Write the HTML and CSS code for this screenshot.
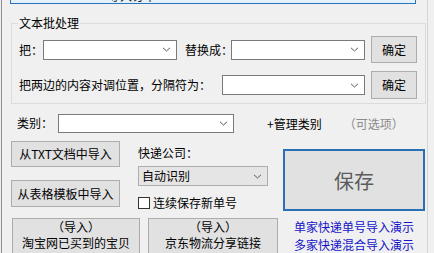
FILE: index.html
```html
<!DOCTYPE html>
<html lang="zh">
<head>
<meta charset="utf-8">
<link rel="stylesheet" href="styles.css">
</head>
<body>
<div class="win">
  <div class="topbtn"><span class="toptext">导入订单</span></div>
  <fieldset class="group">
    <legend>文本批处理</legend>
    <div class="row r1">
      <span class="lbl l-ba">把：</span>
      <div class="combo w134"><svg class="chev" width="9" height="5" viewBox="0 0 9 5"><path d="M1 0.8 L4.5 4 L8 0.8"/></svg></div>
      <span class="lbl l-th">替换成：</span>
      <div class="combo w134"><svg class="chev" width="9" height="5" viewBox="0 0 9 5"><path d="M1 0.8 L4.5 4 L8 0.8"/></svg></div>
      <button class="btn ok">确定</button>
    </div>
    <div class="row r2">
      <span class="lbl l-swap">把两边的内容对调位置，分隔符为：</span>
      <div class="combo w143"><svg class="chev" width="9" height="5" viewBox="0 0 9 5"><path d="M1 0.8 L4.5 4 L8 0.8"/></svg></div>
      <button class="btn ok">确定</button>
    </div>
  </fieldset>
  <div class="catrow">
    <span class="lbl l-cat">类别：</span>
    <div class="combo w176"><svg class="chev" width="9" height="5" viewBox="0 0 9 5"><path d="M1 0.8 L4.5 4 L8 0.8"/></svg></div>
    <span class="manage">+管理类别</span>
    <span class="opt">（可选项）</span>
  </div>
  <div class="lower">
    <div class="lowleft">
      <div class="la">
        <div class="col1">
          <button class="btn imp1">从TXT文档中导入</button>
          <button class="btn imp2">从表格模板中导入</button>
        </div>
        <div class="col2">
          <div class="kd">快递公司：</div>
          <div class="sel"><span>自动识别</span><svg class="chev" width="9" height="5" viewBox="0 0 9 5"><path d="M1 0.8 L4.5 4 L8 0.8"/></svg></div>
          <label class="chk"><span class="box"></span><span>连续保存新单号</span></label>
        </div>
      </div>
      <div class="lb">
        <button class="btn big b1"><span class="bl">（导入）</span><span class="bl">淘宝网已买到的宝贝</span></button>
        <button class="btn big b2"><span class="bl">（导入）</span><span class="bl">京东物流分享链接</span></button>
      </div>
    </div>
    <div class="lowright">
      <button class="save">保存</button>
      <a class="link l1">单家快递单号导入演示</a>
      <a class="link">多家快递混合导入演示</a>
    </div>
  </div>
</div>
</body>
</html>
```
FILE: styles.css
```css
* { box-sizing: border-box; }
html, body {
  margin: 0;
  padding: 0;
  background: #f0f0f0;
  width: 434px;
  height: 253px;
  overflow: hidden;
}
body {
  font-family: "Noto Sans CJK SC", "Microsoft YaHei", sans-serif;
  font-size: 12px;
  color: #000;
}
.win {
  margin-left: 1px;
  width: 427px;
  height: 253px;
  border-left: 1px solid #8e8e8e;
  border-right: 1px solid #d4d4d4;
  overflow: hidden;
}
.topbtn {
  margin: -20px 0 0 8px;
  width: 406px;
  height: 24px;
  border: 1px solid #2a74bd;
  background: #e5f1fb;
  padding: 7px 0 0 97px;
  line-height: 16px;
  overflow: hidden;
}
.toptext { color: #111; }

.group {
  margin: 10px 0 0 9px;
  width: 415px;
  padding: 0 6px 4px 6px;
  border: 1px solid #dcdcdc;
  min-width: 0;
}
.group legend {
  padding: 0 1px;
  line-height: 18px;
  font-size: 12px;
}
.row {
  display: flex;
  align-items: center;
}
.r1 { margin-top: 4px; height: 27px; }
.r2 { margin-top: 8px; height: 28px; }
.lbl { white-space: nowrap; line-height: 16px; }
.l-ba { margin-left: 1px; width: 24px; }
.l-th { margin-left: 8px; width: 46px; }
.l-swap { margin-left: 1px; width: 203px; }
.l-cat { margin-left: 15px; width: 41px; }

.combo {
  height: 20px;
  background: #fff;
  border: 1px solid #7a7a7a;
  display: flex;
  align-items: center;
  justify-content: flex-end;
  padding-right: 5px;
}
.w134 { width: 134px; }
.w143 { width: 143px; }
.w176 { width: 176px; }
.chev path { fill: none; stroke: #5a5a5a; stroke-width: 1; }

.btn {
  font-family: inherit;
  font-size: 12px;
  color: #000;
  background: #e1e1e1;
  border: 1px solid #adadad;
  padding: 0;
  margin: 0;
  line-height: 16px;
}
.ok { margin-left: 6px; width: 46px; }
.r1 .ok { height: 27px; }
.r2 .ok { height: 28px; }

.catrow {
  margin-top: 9px;
  height: 20px;
  display: flex;
  align-items: center;
}
.catrow .combo { height: 19px; }
.manage { margin-left: 33px; white-space: nowrap; }
.opt { margin-left: 22px; color: #8a8a8a; white-space: nowrap; }

.lower {
  margin-top: 8px;
  display: flex;
}
.lowleft { width: 281px; }
.la { display: flex; height: 67px; }
.col1 {
  margin-left: 9px;
  width: 109px;
  display: flex;
  flex-direction: column;
}
.imp1 { height: 26px; }
.imp2 { height: 27px; margin-top: 13px; }
.col2 { margin-left: 18px; width: 130px; }
.kd { margin-top: 3px; line-height: 18px; }
.sel {
  margin-top: 4px;
  height: 20px;
  background: #e5e5e5;
  border: 1px solid #adadad;
  display: flex;
  align-items: center;
  justify-content: space-between;
  padding: 0 5px 0 3px;
  line-height: 16px;
}
.chk {
  margin-top: 10px;
  display: flex;
  align-items: center;
  height: 13px;
  white-space: nowrap;
}
.box {
  width: 12px;
  height: 12px;
  border: 1px solid #333;
  background: #fff;
  margin-right: 3px;
  flex: none;
}
.lb {
  margin-top: 10px;
  margin-left: 10px;
  display: flex;
  gap: 8px;
}
.big {
  height: 40px;
  padding-top: 0;
  display: flex;
  flex-direction: column;
  align-items: center;
  justify-content: flex-start;
}
.bl {
  display: block;
  height: 16px;
  line-height: 16px;
  white-space: nowrap;
}
.b1 { width: 128px; }
.b2 { width: 130px; }

.lowright {
  width: 142px;
  display: flex;
  flex-direction: column;
  align-items: center;
}
.save {
  margin-top: 8px;
  width: 142px;
  height: 62px;
  background: #e1e1e1;
  border: 2px solid #2b6fb4;
  font-family: inherit;
  font-size: 20px;
  color: #5c5c5c;
  padding: 0;
}
.l1 { margin-top: 7px; }
.link {
  color: #1414c8;
  line-height: 18px;
  text-decoration: none;
  white-space: nowrap;
}
```
